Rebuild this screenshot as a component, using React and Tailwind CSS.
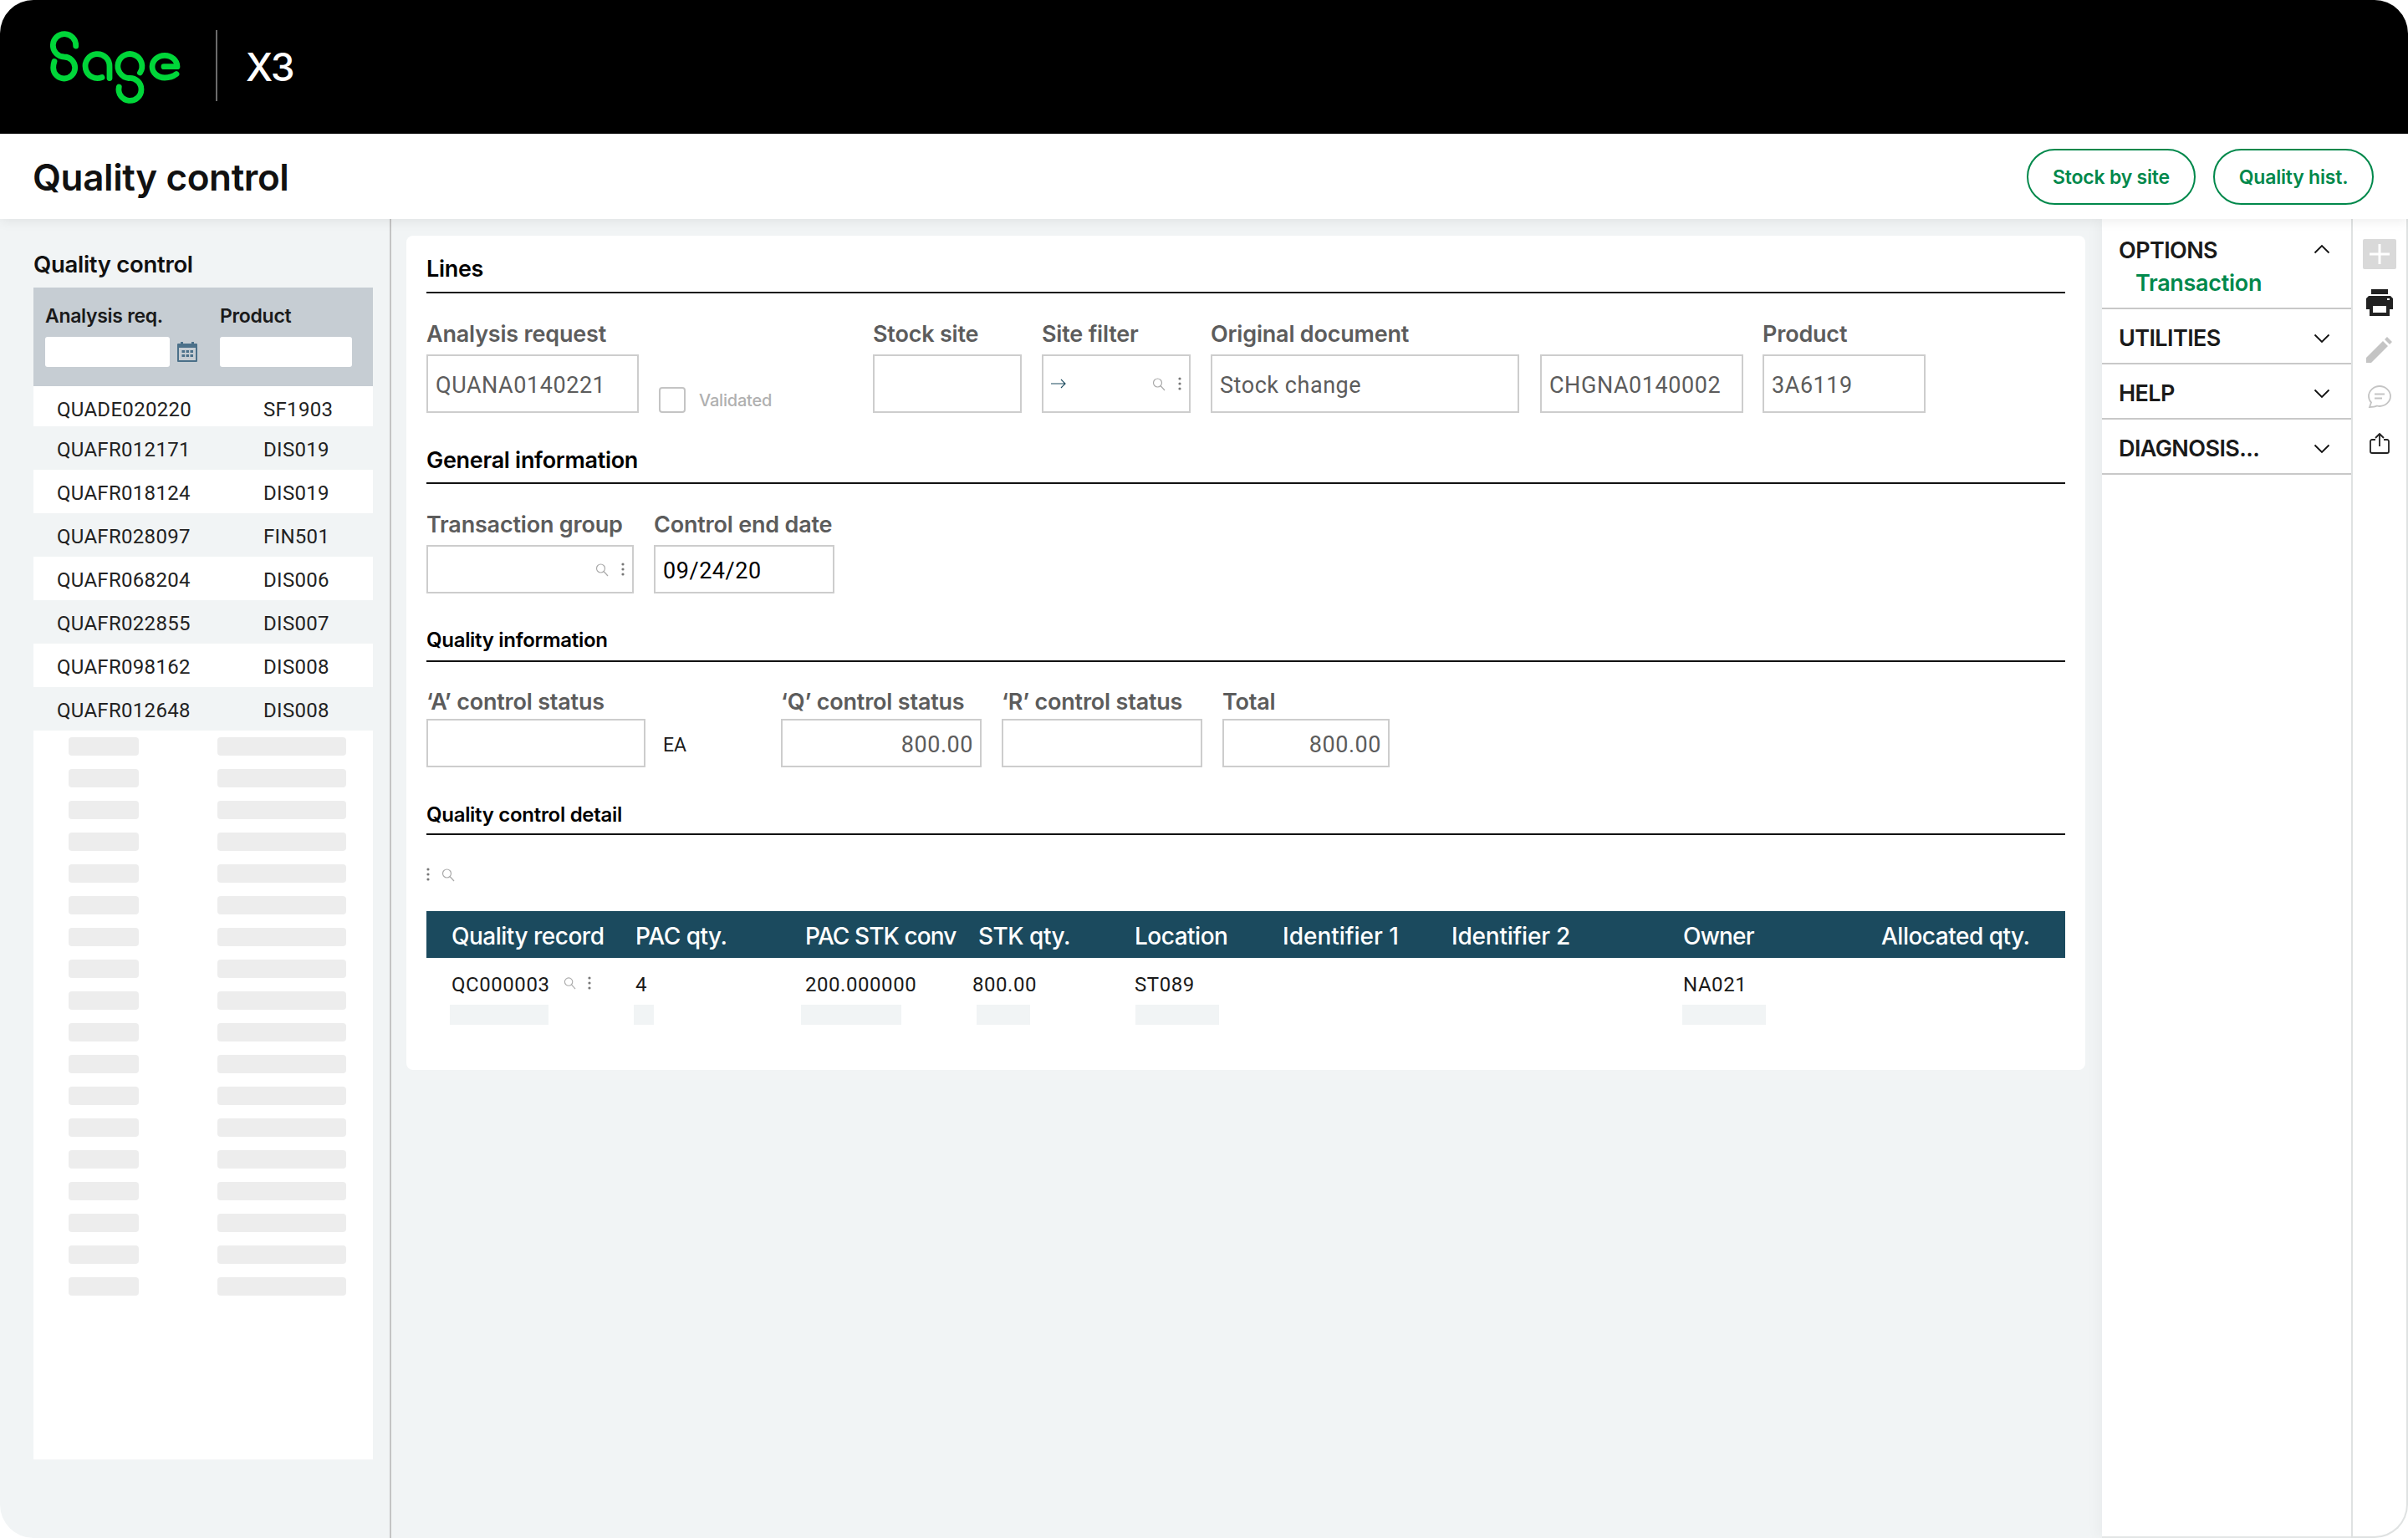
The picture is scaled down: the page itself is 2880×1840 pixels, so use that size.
import React from "react";

const Search = ({ className = "" }) => (
  <svg viewBox="0 0 16 16" className={className} fill="none" stroke="#aaaaaa" strokeWidth="1.2">
    <circle cx="6.5" cy="6.5" r="5" />
    <path d="M10 10l5 5.5" />
  </svg>
);
const Dots = ({ className = "" }) => (
  <svg viewBox="0 0 4 16" className={className} fill="#777777">
    <circle cx="2" cy="2" r="1.6" />
    <circle cx="2" cy="8" r="1.6" />
    <circle cx="2" cy="14" r="1.6" />
  </svg>
);
const Chevron = ({ up }) => (
  <svg viewBox="0 0 20 12" className="w-[20px] h-[12px]" fill="none" stroke="#111111" strokeWidth="1.8">
    <path d={up ? "M1.5 10.5L10 2l8.5 8.5" : "M1.5 1.5L10 10l8.5-8.5"} />
  </svg>
);

const Logo = () => (
  <svg viewBox="55 35 170 95" className="w-[170px] h-[95px]" fill="none" stroke="#00d639" strokeWidth="6.8" strokeLinecap="round" strokeLinejoin="round">
    <path d="M90.700 57A13.700 13.700 0 1 0 76.700 70A13 13 0 1 1 63.700 83Q63.700 79 65 75.500" />
    <path d="M122 94.500A14.500 14.500 0 1 1 131 81.700V95.500" />
    <path d="M167.500 89A14.500 14.500 0 1 0 154 95.500A13.500 13.500 0 1 1 142.300 106" />
    <path d="M196 81.700H212A15 13.300 0 1 0 197 95Q205 95 211 90.500" />
  </svg>
);

const Calendar = () => (
  <svg viewBox="0 0 24 24" className="w-[24px] h-[24px]" fill="#4b7089">
    <path d="M1 2h3V0h3v2h10V0h3v2h3a1 1 0 0 1 1 1v20a1 1 0 0 1-1 1H1a1 1 0 0 1-1-1V3a1 1 0 0 1 1-1z" />
    <rect x="2" y="7" width="20" height="15" fill="#c6cdd3" />
    <g>
      {[5.5, 10.5, 15.5].map((x) => (
        <React.Fragment key={x}>
          <rect x={x} y="10" width="3.500" height="3" />
          <rect x={x} y="15" width="3.500" height="3" />
        </React.Fragment>
      ))}
    </g>
  </svg>
);

const rows = [
  ["QUADE020220", "SF1903"],
  ["QUAFR012171", "DIS019"],
  ["QUAFR018124", "DIS019"],
  ["QUAFR028097", "FIN501"],
  ["QUAFR068204", "DIS006"],
  ["QUAFR022855", "DIS007"],
  ["QUAFR098162", "DIS008"],
  ["QUAFR012648", "DIS008"],
];

const data = "font-['Roboto',sans-serif]";

const Field = ({ label, width, tall, gap = "mb-[8px]", children }) => (
  <div className={`flex flex-col shrink-0 ${width}`}>
    <div className={`h-[34px] flex items-center text-[27px] leading-none font-semibold text-[#5c5c5c] whitespace-nowrap tracking-[-0.2px] ${gap}`}>{label}</div>
    <div className={`${tall ? "h-[70px]" : "h-[58px]"} w-full border-2 border-[#cdcdcd] bg-white flex items-center pl-[9px] pr-[8px] pt-[4px] text-[27px] text-[#5c5c5c] tracking-[0.55px] ${data}`}>
      {children}
    </div>
  </div>
);

const Lookup = ({ arrow }) => (
  <>
    {arrow && (
      <svg viewBox="0 0 18 12" className="w-[18px] h-[12px] -mt-[4px]" fill="none" stroke="#1b4a5e" strokeWidth="1.2">
        <path d="M0 6h17M12 1l5 5-5 5" />
      </svg>
    )}
    <Search className="w-[16px] h-[17px] ml-auto mr-[15px] -mt-[4px]" />
    <Dots className="w-[4px] h-[16px] mr-[1px] -mt-[4px]" />
  </>
);

const Section = ({ title, height, pt, small }) => (
  <div className={`${height} ${pt} flex items-center border-b-2 border-[#111111] ${small ? "text-[24px]" : "text-[27px]"} font-semibold text-black tracking-[-0.3px]`}>
    {title}
  </div>
);

const heads = [
  ["Quality record", "w-[220px]"],
  ["PAC qty.", "w-[203px]"],
  ["PAC STK conv", "w-[207px] tracking-[-0.9px]"],
  ["STK qty.", "w-[187px]"],
  ["Location", "w-[177px]"],
  ["Identifier 1", "w-[202px] tracking-[0px]"],
  ["Identifier 2", "w-[277px] tracking-[-0.2px]"],
  ["Owner", "w-[237px] tracking-[-0.8px]"],
  ["Allocated qty.", "w-[180px]"],
];

const Sk = ({ className }) => <div className={`h-[24px] bg-[#f1f4f5] shrink-0 ${className}`} />;

const MenuItem = ({ label }) => (
  <div className="h-[66px] pt-[6px] border-b-2 border-[#c8c8c8] flex items-center justify-between pl-[20px] pr-[25px] text-[27px] font-semibold tracking-[-0.6px] text-[#1a1a1a]">
    <span>{label}</span>
    <Chevron />
  </div>
);

export default function App() {
  return (
    <div className="w-[2880px] h-[1840px] flex flex-col bg-white overflow-hidden font-['Inter',sans-serif]">
      <header className="h-[160px] shrink-0 bg-black rounded-t-[40px] flex items-center pl-[55px]">
        <Logo />
        <div className="w-[2px] h-[85px] bg-[#6b6b6b] ml-[33px] -mt-[3px]" />
        <div className="ml-[34px] text-[46px] font-medium text-white leading-none tracking-[-1.5px]">X3</div>
      </header>

      <div className="h-[102px] shrink-0 bg-white flex items-center justify-between pl-[39px] pr-[41px] relative z-10 shadow-[0_2px_14px_rgba(0,0,0,0.08)]">
        <div className="text-[44px] font-semibold text-[#111111] tracking-[-0.4px] pt-[1px]">Quality control</div>
        <div className="flex gap-[21px]">
          <div className="w-[202px] h-[67px] pt-[2px] rounded-full border-2 border-[#00884b] flex items-center justify-center text-[23px] font-semibold text-[#00884b] tracking-[-0.2px]">Stock by site</div>
          <div className="w-[192px] h-[67px] pt-[2px] rounded-full border-2 border-[#00884b] flex items-center justify-center text-[23px] font-semibold text-[#00884b] tracking-[-0.2px]">Quality hist.</div>
        </div>
      </div>

      <div className="flex-1 flex min-h-0">
        <aside className="w-[468px] shrink-0 bg-[#f1f4f5] border-r-2 border-[#c4c4c4] rounded-bl-[40px] pl-[40px] pr-[20px]">
          <div className="h-[82px] pt-[28px] flex items-center text-[27.500px] font-semibold text-[#111111] tracking-[-0.3px]">Quality control</div>
          <div className="h-[118px] bg-[#c6cdd3] flex flex-col">
            <div className="mt-[17px] h-[34px] flex items-center text-[23px] font-semibold text-[#1a1a1a] tracking-[-0.3px]">
              <span className="ml-[14px] w-[209px]">Analysis req.</span>
              <span>Product</span>
            </div>
            <div className="mt-[8px] flex items-center">
              <div className="ml-[14px] w-[149px] h-[36px] bg-white rounded-[3px]" />
              <div className="ml-[9px] w-[51px]"><Calendar /></div>
              <div className="w-[158px] h-[36px] bg-white rounded-[3px]" />
            </div>
          </div>
          {rows.map((r, i) => (
            <div key={r[0] + i} className={`flex items-center pl-[28px] text-[24px] text-[#222222] tracking-[0.3px] ${data} ${i === 0 ? "h-[48px] pt-[8px]" : "h-[52px]"} ${i % 2 === 0 ? "bg-white" : "bg-[#f1f4f5] pt-[3px]"} ${i === 2 || i === 4 || i === 6 ? "pt-[4px]" : ""}`}>
              <span className="w-[247px]">{r[0]}</span>
              <span>{r[1]}</span>
            </div>
          ))}
          <div className="h-[872px] bg-white pt-[8px] flex flex-col gap-[16px]">
            {Array.from({ length: 18 }).map((_, i) => (
              <div key={i} className="flex pl-[42px]">
                <div className="w-[84px] h-[22px] rounded-[4px] bg-[#ededed]" />
                <div className="ml-[94px] w-[154px] h-[22px] rounded-[4px] bg-[#ededed]" />
              </div>
            ))}
          </div>
        </aside>

        <main className="flex-1 bg-[#f1f4f5] pl-[18px] pt-[20px] min-w-0">
          <div className="w-[2008px] h-[998px] bg-white rounded-[8px] pl-[24px] pr-[24px]">
            <Section title="Lines" height="h-[69px]" pt="pt-[14px]" />
            <div className="mt-[31px] flex">
              <Field label="Analysis request" width="w-[254px]" tall>QUANA0140221</Field>
              <div className="ml-[24px] w-[256px] h-[112px] flex items-end shrink-0">
                <div className="w-[32px] h-[31px] rounded-[4px] border-2 border-[#c4c4c4]" />
                <div className="ml-[16px] text-[20px] font-medium text-[#b0b0b0] tracking-[-0.2px]">Validated</div>
              </div>
              <Field label="Stock site" width="w-[178px]" tall />
              <div className="w-[24px] shrink-0" />
              <Field label="Site filter" width="w-[178px]" tall><Lookup arrow /></Field>
              <div className="w-[24px] shrink-0" />
              <Field label="Original document" width="w-[369px]" tall>Stock change</Field>
              <div className="w-[25px] shrink-0" />
              <Field label="" width="w-[243px]" tall>CHGNA0140002</Field>
              <div className="w-[23px] shrink-0" />
              <Field label="Product" width="w-[195px]" tall>3A6119</Field>
            </div>

            <Section title="General information" height="h-[85px]" pt="pt-[32px]" />
            <div className="mt-[31px] flex">
              <Field label="Transaction group" width="w-[248px]"><Lookup /></Field>
              <div className="w-[24px] shrink-0" />
              <Field label="Control end date" width="w-[216px]"><span className="text-black">09/24/20</span></Field>
            </div>

            <Section title="Quality information" height="h-[82px]" pt="pt-[32px]" small />
            <div className="mt-[30px] flex">
              <Field label="‘A’ control status" width="w-[262px]" gap="mb-[4px]" />
              <div className={`w-[162px] shrink-0 h-[96px] flex items-end pb-[9px] pl-[21px] text-[23px] text-[#1a1a1a] ${data}`}>EA</div>
              <Field label="‘Q’ control status" width="w-[240px]" gap="mb-[4px]"><span className="ml-auto">800.00</span></Field>
              <div className="w-[24px] shrink-0" />
              <Field label="‘R’ control status" width="w-[240px]" gap="mb-[4px]" />
              <div className="w-[24px] shrink-0" />
              <Field label="Total" width="w-[200px]" gap="mb-[4px]"><span className="ml-auto">800.00</span></Field>
            </div>

            <Section title="Quality control detail" height="h-[81px]" pt="pt-[35px]" small />
            <div className="h-[91px] pt-[3px] flex items-center">
              <Dots className="w-[4px] h-[16px]" />
              <Search className="w-[16px] h-[17px] ml-[14px]" />
            </div>

            <div className="h-[56px] pt-[3px] bg-[#1b4a5e] flex items-center pl-[30px] text-[28px] font-medium text-white tracking-[-0.5px]">
              {heads.map(([t, w]) => (
                <div key={t} className={`${w} shrink-0 whitespace-nowrap`}>{t}</div>
              ))}
            </div>
            <div className={`h-[56px] pt-[8px] flex items-center pl-[30px] text-[24px] text-[#1a1a1a] tracking-[0.55px] ${data}`}>
              <div className="w-[220px] shrink-0 flex items-center">
                <span>QC000003</span>
                <Search className="w-[15px] h-[16px] ml-[17px] -mt-[4px]" />
                <Dots className="w-[4px] h-[16px] ml-[14px] -mt-[4px]" />
              </div>
              <div className="w-[203px] shrink-0">4</div>
              <div className="w-[200px] shrink-0">200.000000</div>
              <div className="w-[194px] shrink-0">800.00</div>
              <div className="w-[656px] shrink-0">ST089</div>
              <div>NA021</div>
            </div>
            <div className="flex pl-[28px]">
              <Sk className="w-[118px]" />
              <Sk className="w-[24px] ml-[102px]" />
              <Sk className="w-[120px] ml-[176px]" />
              <Sk className="w-[64px] ml-[90px]" />
              <Sk className="w-[100px] ml-[126px]" />
              <Sk className="w-[100px] ml-[554px]" />
            </div>
          </div>
        </main>

        <div className="w-[298px] shrink-0 bg-white border-b-2 border-[#e3e6e6] shadow-[-6px_0_14px_rgba(0,0,0,0.03)]">
          <div className="h-[108px] border-b-2 border-[#c8c8c8] pt-[20px] pl-[20px] pr-[25px] text-[27px] font-semibold tracking-[-0.6px]">
            <div className="h-[36px] flex items-center justify-between text-[#1a1a1a]">
              <span>OPTIONS</span>
              <span className="-mt-[4px]"><Chevron up /></span>
            </div>
            <div className="h-[36px] mt-[3px] pl-[20px] flex items-center font-semibold tracking-[-0.3px] text-[#00884b]">Transaction</div>
          </div>
          <MenuItem label="UTILITIES" />
          <MenuItem label="HELP" />
          <MenuItem label="DIAGNOSIS..." />
        </div>

        <div className="w-[68px] shrink-0 bg-white border-l-2 border-r-2 border-b-2 border-[#dfe2e2] rounded-br-[40px] flex flex-col items-center pt-[24px]">
          <div className="w-[40px] h-[36px] bg-[#d9d9d9] rounded-[2px] flex items-center justify-center">
            <svg viewBox="0 0 24 24" className="w-[24px] h-[24px]" stroke="#ffffff" strokeWidth="3"><path d="M12 0v24M0 12h24" /></svg>
          </div>
          <svg viewBox="0 0 32 32" className="w-[32px] h-[32px] mt-[24px]" fill="#222222">
            <rect x="6" y="0" width="20" height="6" />
            <path fillRule="evenodd" d="M3 8h26l3 3v13h-4v8H4v-8H0V11zM8 20v8h16v-8z" />
            <rect x="25" y="11" width="3" height="2" fill="#ffffff" />
          </svg>
          <svg viewBox="0 0 32 32" className="w-[32px] h-[32px] mt-[24px]" fill="#c4c4c4">
            <path d="M0 32v-6L20 6l6 6L6 32zM22 4l3-3 6 6-3 3z" />
          </svg>
          <svg viewBox="0 0 28 27" className="w-[28px] h-[27px] mt-[27px]" fill="none" stroke="#c4c4c4" strokeWidth="1.8">
            <path d="M14 1C7 1 1 6.500 1 13c0 3 1 5.500 3 7.500L2 26c4 0 7-.5 9-1.500 1 .3 2 .5 3 .5 7 0 13-5.500 13-12S21 1 14 1z" />
            <path d="M8 10.500h12M8 15.500h9" />
          </svg>
          <svg viewBox="0 0 24 25" className="w-[24px] h-[25px] mt-[30px]" fill="none" stroke="#222222" strokeWidth="1.8" strokeLinejoin="round">
            <path d="M7 8H3a2 2 0 0 0-2 2v12a2 2 0 0 0 2 2h18a2 2 0 0 0 2-2V10a2 2 0 0 0-2-2h-4" />
            <path d="M12 16V1M7 6l5-5 5 5" />
          </svg>
        </div>
      </div>
    </div>
  );
}
